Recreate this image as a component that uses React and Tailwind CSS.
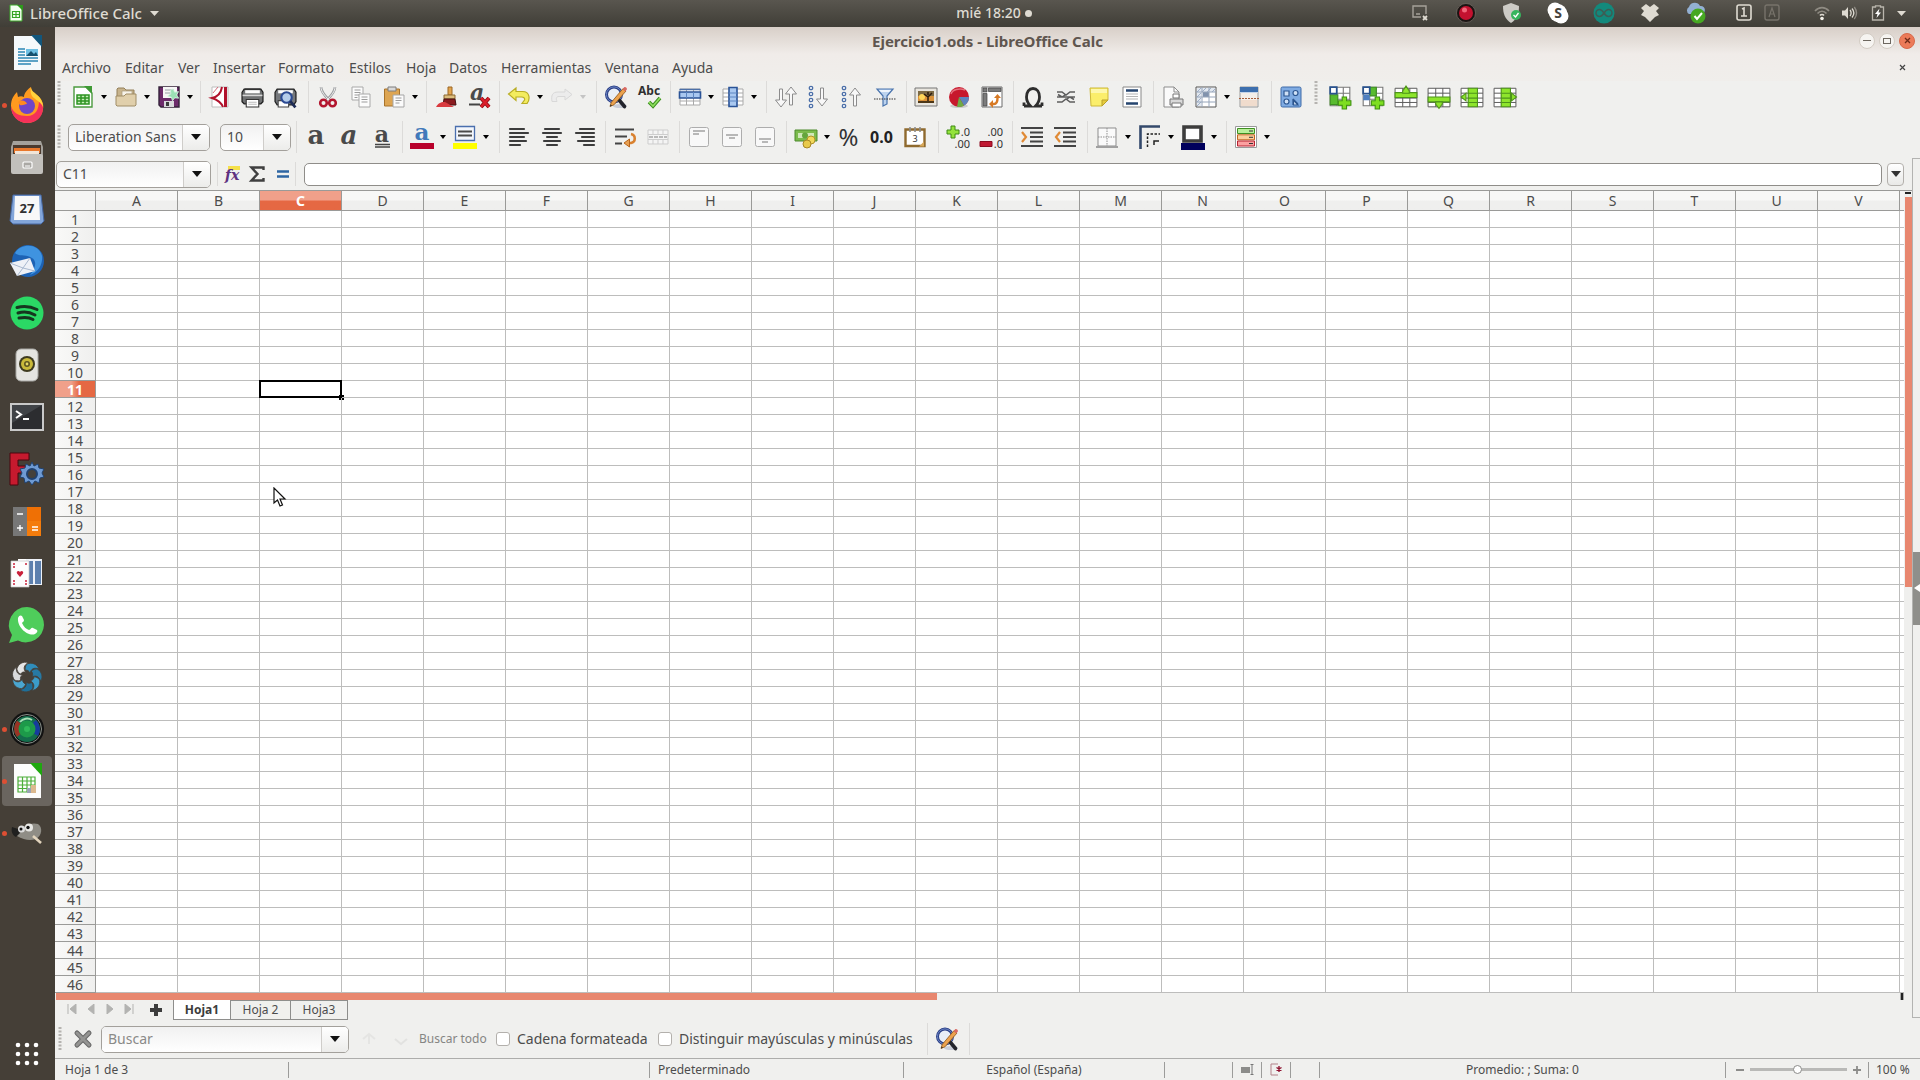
import React from "react";

const COLUMNS = "ABCDEFGHIJKLMNOPQRSTUV".split("");
const ROWS = Array.from({ length: 46 }, (_, i) => i + 1);

/* ---------- shared pieces ---------- */

function Ic({ children, size = 22, box = 22 }) {
  return (
    <svg width={size} height={size} viewBox={`0 0 ${box} ${box}`} fill="none" aria-hidden="true" className="shrink-0 overflow-visible">
      {children}
    </svg>
  );
}

function Tool({ label, children, menu, disabled }) {
  return (
    <>
      <button type="button" aria-label={label} title={label} disabled={disabled} className="flex h-8 w-[33px] shrink-0 items-center justify-center">
        {children}
      </button>
      {menu && (
        <button type="button" aria-label={`${label}: opciones`} disabled={disabled} className="flex h-8 w-[10px] shrink-0 items-center justify-center">
          <svg width="6" height="4" viewBox="0 0 6 4" className={disabled ? "text-[#c4c4c4]" : "text-black"} aria-hidden="true">
            <path d="M0 0h6L3 4z" fill="currentColor" />
          </svg>
        </button>
      )}
    </>
  );
}

function Group({ className, first, children }) {
  return (
    <div className={`flex h-8 shrink-0 items-center border-l pl-[2px] ${first ? "border-transparent" : "border-[#dcdbd9]"} ${className}`}>
      {children}
    </div>
  );
}

function Grip() {
  return (
    <div className="flex h-6 w-[8px] shrink-0 items-center justify-center">
      <svg width="4" height="24" viewBox="0 0 4 24" aria-hidden="true">
        <path d="M2 0v24" stroke="#b5b3b0" strokeWidth="3" strokeDasharray="2 1.5" />
      </svg>
    </div>
  );
}

function Combo({ label, value, className }) {
  return (
    <div className={`relative h-[27px] shrink-0 ${className}`}>
      <select
        aria-label={label}
        defaultValue={value}
        className="h-full w-full appearance-none overflow-hidden rounded-[5px] border border-[#a3a09b] bg-gradient-to-b from-[#f1f1f1] to-white pr-[28px] pl-[6px] text-sm leading-5 text-[#4c4c4c]"
      >
        <option>{value}</option>
      </select>
      <span className="pointer-events-none absolute inset-y-px right-px flex w-[27px] items-center justify-center rounded-r-[4px] border-l border-[#cfcdca] bg-gradient-to-b from-white to-[#ececea]">
        <svg width="10" height="6" viewBox="0 0 10 6" aria-hidden="true"><path d="M0 0h10L5 6z" fill="#111" /></svg>
      </span>
    </div>
  );
}

/* ---------- toolbar drawings ---------- */

const magnifierPencil = (
  <Ic size={24} box={24}>
    <ellipse cx="16" cy="21" rx="7" ry="2" fill="#c9cdd8" />
    <circle cx="10" cy="9.5" r="7.5" stroke="#2b3f86" strokeWidth="3" fill="#e9eef6" />
    <circle cx="10" cy="9.5" r="7.6" stroke="#6b85c4" strokeWidth="1" />
    <path d="M15.5 15.5l5 6" stroke="#23242c" strokeWidth="3.6" strokeLinecap="round" />
    <path d="M6 21.5l1.2-4L19 3.6l3 2.4L10 19.8z" fill="#eca24e" stroke="#8a5418" strokeWidth=".8" />
    <path d="M18.6 4l1.6-1.8c1-.8 3.4 1 2.6 2.4L21.4 6.4z" fill="#d96a63" />
    <path d="M6 21.5l.7-2 1.3 1.1z" fill="#222" />
  </Ic>
);

const newSheet = (
  <Ic>
    <path d="M2 1h12l6 6v14H2z" fill="#fff" stroke="#4b9a3f" strokeWidth="1.4" />
    <path d="M12 0h8v8z" fill="#3f9a35" />
    <path d="M5 9h12v9H5z" fill="#c6efb9" />
    <path d="M5 9h12v9H5zM5 12h12M5 15h12M9 9v9M13 9v9" stroke="#2e9422" strokeWidth="1.5" />
  </Ic>
);
const openFolder = (
  <Ic>
    <path d="M2 3l1-1h6l2 2h8v15H2z" fill="#c7b38c" stroke="#94805a" />
    <path d="M7 5h10v9H7z" fill="#f7f3e9" stroke="#a99b7c" strokeWidth=".7" />
    <path d="M1 10h8l2-2h10v11l-1 1H2l-1-1z" fill="#e0cfab" stroke="#a08d67" />
  </Ic>
);
const save = (
  <Ic size={24} box={24}>
    <path d="M2 2h20v20H4l-2-2z" fill="#6d2b6b" stroke="#34223a" strokeWidth="1.4" />
    <path d="M6 2h14v11H6z" fill="#f7f7f7" />
    <path d="M8 5h9M8 8h7" stroke="#9aa0a6" />
    <path d="M7 16h10v6H7z" fill="#d9d9dc" />
    <path d="M9 17h3v4H9z" fill="#3b3b3b" />
    <path d="M16 4l1.7 3.2 3.8-.6-1.8 3.4 2 3.2-3.9-.4-2.3 3-1.2-3.6-3.6-1.2 3.2-2.2-.5-3.6z" fill="#9be0b5" stroke="#d4f3df" strokeWidth=".8" />
  </Ic>
);
const pdf = (
  <Ic>
    <path d="M3 1h16v20H3z" fill="#fff" stroke="#bdbdbd" />
    <path d="M13 1C12 7 8 11 3 12c6 2 9 4 11 9" stroke="#b1122c" strokeWidth="2" />
    <path d="M16.5 1v20" stroke="#b1122c" strokeWidth="3" />
    <path d="M9 1L4 7" stroke="#d16a79" />
  </Ic>
);
const printer = (
  <Ic size={23}>
    <path d="M4 3h14v6H4z" fill="#fafafa" stroke="#333" />
    <path d="M1 6l2-3h16l2 3v9l-2 2H3l-2-2z" fill="#6f7172" stroke="#1f1f1f" strokeWidth="1.2" />
    <path d="M4 4h14v3H4z" fill="#fdfdfd" />
    <path d="M1.5 9h19" stroke="#d6d6d6" strokeWidth="1.5" />
    <path d="M5 13h12v7H5z" fill="#fff" stroke="#333" />
    <path d="M7 15.5h8M7 17.5h8" stroke="#bcbcbc" />
  </Ic>
);
const preview = (
  <Ic size={23}>
    <path d="M1 6l2-3h16l2 3v9l-2 3H3l-2-3z" fill="#75787c" stroke="#1f1f1f" strokeWidth="1.2" />
    <path d="M4 4h14v3H4z" fill="#fdfdfd" />
    <path d="M4 14h10v6H4z" fill="#fff" stroke="#444" />
    <circle cx="12" cy="11" r="5" fill="#b5cdea" stroke="#2b4a93" strokeWidth="2" />
    <path d="M15.5 14.5l5 6" stroke="#1d2b55" strokeWidth="2.6" />
  </Ic>
);
const cut = (
  <Ic>
    <path d="M4 1c0 4 3 8 8 13M18 1c0 4-3 8-8 13" stroke="#9a9c9e" strokeWidth="2.6" />
    <path d="M4 1c0 4 3 8 8 13M18 1c0 4-3 8-8 13" stroke="#f2f2f2" strokeWidth="1" />
    <circle cx="6.5" cy="17" r="3.3" stroke="#b3162e" strokeWidth="2.6" />
    <circle cx="15.5" cy="17" r="3.3" stroke="#b3162e" strokeWidth="2.6" />
  </Ic>
);
const copy = (
  <Ic>
    <path d="M2 1h11v13H2z" fill="#fcfcfc" stroke="#a8a8a8" />
    <path d="M4.5 4h6M4.5 6.5h6M4.5 9h6M4.5 11.5h3" stroke="#9c9c9c" />
    <path d="M9 8h11v13H9z" fill="#fcfcfc" stroke="#a8a8a8" />
    <path d="M11.5 11h6M11.5 13.5h6M11.5 16h6" stroke="#9c9c9c" />
  </Ic>
);
const paste = (
  <Ic>
    <path d="M1.5 3h15v17h-15z" fill="#dda552" stroke="#a8732a" />
    <path d="M5 1h8v4H5z" fill="#d9d9d9" stroke="#7c7c7c" />
    <path d="M10 9h11v12H10z" fill="#fbfbfb" stroke="#a5a5a5" />
    <path d="M12.5 12h6M12.5 14.5h6M12.5 17h4" stroke="#9c9c9c" />
  </Ic>
);
const brush = (
  <Ic>
    <path d="M13 1h4v8h-4z" fill="#e3a54e" stroke="#9c6722" />
    <path d="M9 9h11v4H9z" fill="#dcbd7d" stroke="#8c6a32" />
    <path d="M9 13h11l1 6H8z" fill="#8b1b1f" stroke="#451012" />
    <path d="M1 21c3-5 6-5 9-5l9 5z" fill="#d93a3f" />
  </Ic>
);
const clearFormat = (
  <Ic size={24} box={24}>
    <text x="3" y="15" fontFamily="DejaVu Serif, serif" fontStyle="italic" fontWeight="bold" fontSize="22" fill="#4b4b4b">a</text>
    <path d="M2 19.5h11" stroke="#444" strokeWidth="2" />
    <path d="M14 13l8 9M22 13l-8 9" stroke="#8e0c14" strokeWidth="4" />
    <path d="M14 13l8 9M22 13l-8 9" stroke="#dc1f2b" strokeWidth="2.4" />
  </Ic>
);
const undo = (
  <Ic size={24} box={24}>
    <path d="M9 3L1.5 9 9 15.5V12h5.5c2.5 0 3.5 1.5 3 3l-2.5 3.5h5c3-3.5 3.5-12-4.5-12H9z" fill="#f3ec5f" stroke="#b9ad25" strokeWidth="1.2" />
  </Ic>
);
const redo = (
  <Ic size={24} box={24}>
    <path d="M15 4l7 5.5-7 5.5v-3.5H9c-3 0-3 2-2 5H2C1 11 2 7 8 7h7z" fill="#ececec" stroke="#d8d8d8" />
  </Ic>
);
const spell = (
  <Ic size={26} box={26}>
    <text x="2" y="11" fontFamily="Noto Sans, sans-serif" fontWeight="bold" fontSize="12" fill="#303030">Abc</text>
    <path d="M13 18l4 4 7-8" stroke="#3d8f1f" strokeWidth="3.6" />
    <path d="M13 18l4 4 7-8" stroke="#8fe060" strokeWidth="1.6" />
  </Ic>
);
const rowIcon = (
  <Ic size={24} box={24}>
    <path d="M2 4h20v16H2z" fill="#fff" stroke="#a9a9a9" />
    <path d="M2 8h20M2 12h20M2 16h20M8.5 4v16M15.5 4v16" stroke="#a9a9a9" />
    <path d="M1.5 7h21v6h-21z" fill="#a9c8f0" stroke="#2a5397" strokeWidth="1.6" />
    <path d="M1.5 4.5h21" stroke="#4c70a8" strokeWidth="1.5" />
    <path d="M8.5 7v6M15.5 7v6" stroke="#5c86c2" />
  </Ic>
);
const colIcon = (
  <Ic size={24} box={24}>
    <path d="M2 4h20v16H2z" fill="#fff" stroke="#a9a9a9" />
    <path d="M2 8h20M2 12h20M2 16h20M8.5 4v16M15.5 4v16" stroke="#a9a9a9" />
    <path d="M8 2.5h8v19H8z" fill="#a9c8f0" stroke="#2a5397" strokeWidth="1.6" />
    <path d="M8 8h8M8 12h8M8 16h8" stroke="#5c86c2" />
  </Ic>
);
const arrowDown = "M-1.5 0h3v11h4L0 18l-5.5-7h4z";
const sort = (
  <Ic size={24} box={24}>
    <g fill="#f8f8f8" stroke="#8c8c8c">
      <path d={arrowDown} transform="translate(7 4)" />
      <path d={arrowDown} transform="translate(17 20) scale(1 -1)" />
    </g>
  </Ic>
);
const dots = (
  <g stroke="#4a6ea8" strokeWidth="1.3" fill="#fff">
    <circle cx="4" cy="3" r="1.7" /><circle cx="4" cy="9" r="1.7" /><circle cx="4" cy="15" r="1.7" /><circle cx="4" cy="21" r="1.7" />
  </g>
);
const sortAsc = (
  <Ic size={24} box={24}>{dots}<path d={arrowDown} transform="translate(15 3)" fill="#f8f8f8" stroke="#8c8c8c" /></Ic>
);
const sortDesc = (
  <Ic size={24} box={24}>{dots}<path d={arrowDown} transform="translate(15 21) scale(1 -1)" fill="#f8f8f8" stroke="#8c8c8c" /></Ic>
);
const filter = (
  <Ic>
    <path d="M3 3h16l-6 7v8l-4 2v-10z" fill="#bcd3ee" stroke="#4a74ad" strokeWidth="1.2" />
    <path d="M5 4h12l-2 2H7z" fill="#eef5fc" />
    <path d="M0 13h22" stroke="#333" strokeDasharray="1.5 1" />
  </Ic>
);
const picture = (
  <Ic size={24} box={24}>
    <path d="M1 3h22v18H1z" fill="#e9e6df" stroke="#777" />
    <path d="M4 6h16v12H4z" fill="#d9913a" />
    <path d="M4 6h16v5H4z" fill="#7d6a44" />
    <circle cx="8" cy="12" r="3" fill="#ffd65a" />
    <path d="M14 18v-6l-4-3M14 12l4-4M14 10V7" stroke="#2c1c0c" strokeWidth="1.5" />
    <path d="M4 16h16v2H4z" fill="#4c3718" />
  </Ic>
);
const chart = (
  <Ic>
    <ellipse cx="11" cy="20" rx="9" ry="2" fill="#ccc" />
    <circle cx="11" cy="11" r="10" fill="#c7182c" />
    <path d="M11 11h10a10 10 0 01-5 8.7z" fill="#5f84bd" />
    <path d="M11 11l5 8.7a10 10 0 01-7 1z" fill="#70ab45" />
    <path d="M3 8a9 6 0 0114-4" stroke="#e4707c" strokeWidth="1.5" />
  </Ic>
);
const pivot = (
  <Ic>
    <path d="M1 1h20v20H1z" fill="#fff" stroke="#6c6c6c" />
    <path d="M2 2h4v4H2zM7.5 2H20v3.5H7.5zM2 7.5h4V20H2z" fill="#7c7c7c" stroke="#444" strokeWidth=".7" />
    <path d="M11 18h2c3 0 3.500-3 3.500-6" stroke="#d77a25" strokeWidth="2.4" />
    <path d="M13 12l3.500-4 3.500 4zM12 14l-4 4 4 4z" fill="#d77a25" />
  </Ic>
);
const omega = (
  <Ic><path d="M2 20h6.500c-3-3-4-5.500-4-9C4.500 6 7 2.500 11 2.500s6.500 3.500 6.500 8.500c0 3.500-1 6-4 9H20M2 20v-3.500M20 20v-3.500" stroke="#2d2d2d" strokeWidth="2.8" /></Ic>
);
const link = (
  <Ic>
    <path d="M2 6h5l4 3 4-3h5M2 16h5l4-3 4 3h5M2 11h5l3-2M20 11h-5l-3 2M7 11h8M3 8.500l4 2.500M19 13.500l-4-2.500" stroke="#5d5d5d" strokeWidth="1.5" />
  </Ic>
);
const note = (
  <Ic>
    <path d="M2 2h18v12l-6 6H3z" fill="#fbee6b" stroke="#cdb93a" />
    <path d="M3 3h16v4H3z" fill="#fdf7ad" />
    <path d="M20 14h-6v6z" fill="#e6cb3c" stroke="#b8a02c" />
  </Ic>
);
const headerFooter = (
  <Ic>
    <path d="M2 1h18v20H2z" fill="#fff" stroke="#888" />
    <path d="M5 4.5h12M5 17.5h12" stroke="#26456f" strokeWidth="2.6" />
    <path d="M5 8h12M5 10.5h12M5 13h12" stroke="#b5b5b5" />
  </Ic>
);
const printArea = (
  <Ic>
    <path d="M2 1h10l5 5v15H2z" fill="#fafafa" stroke="#8d8d8d" />
    <path d="M12 1v5h5" stroke="#8d8d8d" />
    <path d="M11 8h6v4h-6z" fill="#fff" stroke="#777" />
    <path d="M8 13h13v6H8z" fill="#d9d9d9" stroke="#777" />
    <path d="M10 17h9v4h-9z" fill="#fff" stroke="#777" />
  </Ic>
);
const freeze = (
  <Ic>
    <path d="M1 1h20v20H1z" fill="#fff" stroke="#555" />
    <path d="M2 2h18v4H2zM2 6h4v14H2z" fill="#e2e8f0" />
    <path d="M2 6l4-4M7 6l4-4M12 6l4-4M17 6l3-3M2 11l4-4M2 16l4-4M2 20l4-4" stroke="#9fb0c8" />
    <path d="M8 6h6v5H8z" fill="#8193ad" />
    <path d="M7 1v20M14 1v20M1 6h20M1 11h20M1 16h20" stroke="#96a5ba" />
  </Ic>
);
const split = (
  <Ic>
    <path d="M2 1h18v20H2z" fill="#f4efe9" stroke="#9b9b9b" />
    <path d="M2 1h18v5H2z" fill="#3d6fae" />
    <path d="M2 6.5h18" stroke="#c6d5e8" />
    <path d="M1 12.5h20" stroke="#a85e3a" strokeDasharray="2 1" />
    <path d="M3 14h16v6H3z" fill="#f0dccd" />
  </Ic>
);
const shapes = (
  <Ic>
    <rect x="1" y="1" width="20" height="20" rx="1.5" fill="#7fabe2" stroke="#3f6ba8" />
    <g fill="#cfe0f5" stroke="#2d5791" strokeWidth="1.2">
      <path d="M4 5h5v5H4zM13.5 14v5h4.500z" /><circle cx="15.5" cy="7" r="2.5" /><circle cx="6.5" cy="15.5" r="2.5" />
      <path d="M13 13l5 5M13 13v6" />
    </g>
  </Ic>
);
const gridBase = (
  <>
    <path d="M1 3h20v17H1z" fill="#fff" stroke="#5a5a5a" strokeWidth=".9" />
    <path d="M1 7.5h20M1 12h20M1 16h20M8 3v17M14.5 3v17" stroke="#5a5a5a" strokeWidth=".9" />
  </>
);
const plusGreen = (
  <path d="M13 11h4v3.500h4v4h-4V22h-4v-3.500H9.500v-4H13z" fill="#7ede22" stroke="#3f9210" />
);
const insRow = (
  <Ic size={24}><path d="M2 2h18v17H2z" fill="#fff" stroke="#777" /><path d="M2 7.500h18M2 13h18M8 2v17M14 2v17" stroke="#777" /><path d="M2 9h7v9H2z" fill="#58bb2e" stroke="#3c8e20" /><path d="M2 2h6v6H2z" fill="#fff" stroke="#28528e" strokeWidth="1.6" />{plusGreen}</Ic>
);
const insCol = (
  <Ic size={24}><path d="M2 2h18v17H2z" fill="#fff" stroke="#777" /><path d="M2 7.500h18M2 13h18M8 2v17M14 2v17" stroke="#777" /><path d="M8 2h6v8H8z" fill="#58bb2e" stroke="#3c8e20" /><path d="M2 9h6v5H2z" fill="#4f7fc0" /><path d="M2 2h6v6H2z" fill="#fff" stroke="#28528e" strokeWidth="1.6" />{plusGreen}</Ic>
);
const rowAbove = <Ic size={24}>{gridBase}<path d="M1 7h20v4.500H1z" fill="#8ee52c" stroke="#4d941a" /><path d="M8 5.500l3-4.500 3 4.500v2H8z" fill="#8ee52c" stroke="#4d941a" /></Ic>;
const rowBelow = <Ic size={24}>{gridBase}<path d="M1 11h20v4.500H1z" fill="#8ee52c" stroke="#4d941a" /><path d="M8 17.500l3 4 3-4v-2H8z" fill="#8ee52c" stroke="#4d941a" /></Ic>;
const colBefore = <Ic size={24}>{gridBase}<path d="M7.500 3H16v17H7.500z" fill="#8ee52c" stroke="#4d941a" /><path d="M7.500 7.500h8.500M7.500 12h8.500M7.500 16h8.500" stroke="#4d941a" /><path d="M5.500 7.500L1 11l4.500 3.500z" fill="#8ee52c" stroke="#4d941a" /></Ic>;
const colAfter = <Ic size={24}>{gridBase}<path d="M7.500 3H16v17H7.500z" fill="#8ee52c" stroke="#4d941a" /><path d="M7.500 7.500h8.500M7.500 12h8.500M7.500 16h8.500" stroke="#4d941a" /><path d="M17 7.500l4.500 3.500-4.500 3.500z" fill="#8ee52c" stroke="#4d941a" /></Ic>;

function Letter({ italic, under, color = "#4a4a4a" }) {
  return (
    <Ic>
      <text x="11" y={under ? "16" : "18"} textAnchor="middle" fontFamily="DejaVu Serif, serif" fontWeight="bold" fontStyle={italic ? "italic" : "normal"} fontSize={under ? "22" : "26"} fill={color}>a</text>
      {under && <path d="M4 18.500h15M4 21h15" stroke="#444" strokeWidth="1.300" />}
    </Ic>
  );
}
const fontColor = (
  <Ic size={24} box={24}>
    <text x="12" y="15" textAnchor="middle" fontFamily="DejaVu Serif, serif" fontWeight="bold" fontSize="23" fill="#4179ba">a</text>
    <path d="M0 18h24v6H0z" fill="#b8002a" />
  </Ic>
);
const highlight = (
  <Ic size={24} box={24}>
    <path d="M2.500 1.500h19v14h-19z" fill="#f3f6fb" stroke="#4a6fae" strokeWidth="1.300" />
    <path d="M5 6.500h14M5 10.500h14" stroke="#4a4a4a" strokeWidth="2" />
    <path d="M0 18h24v6H0z" fill="#ff0" />
  </Ic>
);
function Align({ rows }) {
  return (
    <Ic>
      {rows.map(([a, b], i) => (
        <path key={i} d={`M${a} ${3 + i * 4}h${b}`} stroke="#3c3c3c" strokeWidth="2.200" strokeLinecap="round" />
      ))}
    </Ic>
  );
}
const wrap = (
  <Ic size={24} box={24}>
    <path d="M2 4.500h19M2 11.500h12M2 18.500h7" stroke="#444" strokeWidth="2.200" />
    <path d="M18 9c5 1 5 8 0 9h-3" stroke="#d9812f" strokeWidth="2.600" />
    <path d="M16.500 14v8L11 18z" fill="#e8a052" stroke="#b9661c" />
  </Ic>
);
const merge = (
  <Ic>
    <path d="M1 4h20v14H1zM1 8.500h20M1 13.500h20M6 4v4.500M11 4v4.500M16 4v4.500M6 13.500V18M11 13.500V18M16 13.500V18" stroke="#cdcdcd" fill="#f4f4f4" />
    <path d="M2 11h18" stroke="#bababa" strokeWidth="2" strokeDasharray="4 1" />
  </Ic>
);
function VAlign({ y, short }) {
  return (
    <Ic>
      <rect x="1.500" y="1.500" width="19" height="19" rx="2" fill="#f8f8f8" stroke="#adadad" />
      <path d={`M5 ${y}h12M${short} ${y + 3}h6`} stroke="#777" />
    </Ic>
  );
}
const currency = (
  <Ic size={24} box={24}>
    <path d="M1 5h22v11H1z" fill="#7bbb4c" stroke="#4c8a2c" />
    <path d="M4 8h16v5H4z" fill="#cfe8b8" />
    <circle cx="11" cy="10.500" r="3" fill="#63a53c" />
    <circle cx="17" cy="15" r="4" fill="#f2d95b" stroke="#b0912a" />
    <circle cx="13" cy="19" r="4" fill="#e8c94b" stroke="#a88724" />
  </Ic>
);
const calendarIcon = (
  <Ic>
    <path d="M1.500 3.500h19V20h-19z" fill="#fff" stroke="#8f6a2e" strokeWidth="2.400" />
    <path d="M6 1v5M11 1v5M16 1v5" stroke="#8d8d8d" strokeWidth="1.600" />
    <text x="11" y="16" textAnchor="middle" fontFamily="Noto Sans, sans-serif" fontSize="9" fill="#333">3</text>
    <path d="M15 20.500l5-5v5z" fill="#d7a758" />
  </Ic>
);
function Decimal({ add }) {
  return (
    <Ic size={24} box={24}>
      {add
        ? <path d="M5 1h4v4h4v4H9v4H5V9H1V5h4z" fill="#93e33c" stroke="#3e8a14" />
        : <path d="M1 16.500h12v5H1z" fill="#c01a33" stroke="#8c0d20" />}
      <text x="24" y="11" textAnchor="end" fontFamily="Noto Sans, sans-serif" fontSize="11" fill="#333">{add ? ".0" : ".00"}</text>
      <text x="24" y="23" textAnchor="end" fontFamily="Noto Sans, sans-serif" fontSize="11" fill="#333">{add ? ".00" : ".0"}</text>
    </Ic>
  );
}
function Indent({ out }) {
  return (
    <Ic size={24} box={24}>
      <path d="M1 3h22M1 21h22M10 7.500h13M10 12h13M10 16.500h13" stroke="#444" strokeWidth="2" />
      <path d={out ? "M7 7l-4 5 4 5" : "M2 7l4 5-4 5"} stroke="#e08a35" strokeWidth="2.200" />
    </Ic>
  );
}
const borders = (
  <Ic size={24} box={24}>
    <path d="M3 3h18v18H3z" fill="#fafafa" stroke="#8d8d8d" />
    <path d="M12 3v18M3 12h18" stroke="#8f8f8f" strokeDasharray="1.500 1" />
    <path d="M1 22h22" stroke="#a0a0a0" strokeWidth="2" />
  </Ic>
);
const borderStyle = (
  <Ic size={24} box={24}>
    <path d="M2.500 24V1.500H22" stroke="#34496b" strokeWidth="2.600" />
    <path d="M9.500 22V9H22" stroke="#222" strokeWidth="1.500" strokeDasharray="2.500 1.500" />
    <path d="M16 20v-4h5" stroke="#222" strokeWidth="1.500" />
  </Ic>
);
const borderColor = (
  <Ic size={26} box={26}>
    <path d="M4 3h17v14H4z" fill="#fff" stroke="#3d3d3d" strokeWidth="3.600" />
    <path d="M1 19h24v7H1z" fill="#00005c" />
  </Ic>
);
const conditional = (
  <Ic size={24} box={24}>
    <path d="M1.500 1.500h21v21h-21z" fill="#fff" stroke="#9a9a9a" />
    <path d="M3.500 3.500h17v5h-17z" fill="#b9f09a" stroke="#3f8f22" />
    <path d="M3.500 9.800h17v5h-17z" fill="#fbcf9d" stroke="#c0641e" />
    <path d="M3.500 16h17v5h-17z" fill="#fba0a0" stroke="#b62130" />
    <path d="M15 6h4M15 12.300h4M15 18.500h4" stroke="#333" />
  </Ic>
);

/* ---------- dock ---------- */

const D = ({ children }) => <Ic size={36} box={36}>{children}</Ic>;

const blade = "M18 5C23 3 28 5 30 10C25 8 22 10 21 14C20 12 19 11 16 11C16 8 17 6 18 5z";
const bladeColors = ["#2f8dbb", "#2779a3", "#3b9cc9", "#1f6f99", "#4aa6d0", "#d9dadb", "#e6e6e6"];

const dockItems = [
  { name: "LibreOffice Writer", icon: <D><path d="M5 1h19l8 9v25H5z" fill="#f5f9fb" /><path d="M22 0h11v12z" fill="#12567c" /><path d="M9 14h7M9 17h7M9 20h7M9 23h20M9 26h20M9 29h13" stroke="#2c86b5" strokeWidth="1.6" /><path d="M17 14h12v7H17z" fill="#6ec0e4" /><path d="M17 21l5-5 3 3 2-2 2 4z" fill="#14506f" /></D> },
  { name: "Firefox", running: true, icon: <D><path d="M2 19C2 12 5 8 8 5l1 5c2-1 4-1 6 0C15 6 19 2 22 0c0 4 3 5 6 8 5 4 7 9 6 14-1 8-8 14-16 14S2 29 2 19z" fill="#ff9a1f" /><path d="M2 19c0 10 7 17 16 17s16-6 16-15c0-4-2-6-4-8 0 9-3 16-12 16C10 29 4 26 2 19z" fill="#f5315a" /><path d="M22 0c0 4 3 5 6 8 4 3 6 8 6 12-2-5-6-6-9-9-3-2-4-6-3-11z" fill="#ffd23c" /><circle cx="18" cy="19" r="8" fill="#6e45c9" /><path d="M9 15c4-3 8-1 9 2-3 0-4 2-7 1z" fill="#ff8a1e" /></D> },
  { name: "Archivos", icon: <D><path d="M4 2h28l2 6v22H2V8z" fill="#a4a19c" /><path d="M4 6h28v10H4z" fill="#4b3a2e" /><path d="M5 9h26v5H5z" fill="#e9782c" /><path d="M6 12h24v3H6z" fill="#f1e5d8" /><rect x="2" y="15" width="32" height="20" rx="2" fill="#c2c0bc" /><rect x="14" y="23" width="9" height="6" rx="1" fill="#aaa8a4" stroke="#fff" strokeWidth="1.2" /><path d="M16 27h5" stroke="#fff" /></D> },
  { name: "Calendario", icon: <D><path d="M4 4h28l3 26-3 3H4l-3-3z" fill="#83a6da" stroke="#4669a5" /><path d="M6 5h24l1 24H5z" fill="#f8f8f8" /><text x="18" y="22" textAnchor="middle" fontFamily="Noto Sans, sans-serif" fontWeight="bold" fontSize="13" fill="#303030">27</text></D> },
  { name: "Thunderbird", icon: <D><circle cx="19" cy="18" r="16" fill="#1d62b4" /><path d="M6 10C12 0 30 0 33 13c1 7-3 16-12 19 6-7 7-14 2-17C18 11 10 14 6 10z" fill="#3f93e0" /><path d="M1 20l20-5 5 13-18 5z" fill="#eef1f7" /><path d="M1 20l13 5 7-10M8 33l6-8 12 3" stroke="#a9b9d0" /></D> },
  { name: "Spotify", icon: <D><circle cx="18" cy="18" r="16.5" fill="#2bd965" /><path d="M8 12.500c7-2 14-1 20 2M9 18c6-2 12-1 17 2M10 23c5-1 10-1 14 1.500" stroke="#16361f" strokeWidth="3" strokeLinecap="round" /></D> },
  { name: "Rhythmbox", icon: <D><rect x="7" y="2" width="22" height="32" rx="5" fill="#e4e4e1" stroke="#a9a9a5" /><circle cx="18" cy="17" r="8" fill="#3e3b20" /><circle cx="18" cy="17" r="6" fill="#c9b93a" /><circle cx="18" cy="17" r="3" fill="#5e5622" /><circle cx="18" cy="17" r="1.4" fill="#e6d965" /></D> },
  { name: "Terminal", icon: <D><path d="M2 5h32v26H2z" fill="#2c2d30" stroke="#c9c9c9" strokeWidth="2" /><path d="M3 6h30L3 24z" fill="#404347" /><path d="M7 12l5 3.500L7 19M14 20h6" stroke="#fff" strokeWidth="2" /></D> },
  { name: "FreeCAD", icon: <D><path d="M1 2h19v7H9v6h9v7H9v12H1z" fill="#c61a2e" stroke="#4b070f" /><g stroke="#20416e" fill="#6e9ad3"><path d="M23 11l2 4 4-2 1 4 5 1-2 4 2 4-4 1-1 5-4-2-3 4-3-4-4 2-1-5-4-1 2-4-2-4 5-1 1-4 4 2z" /><circle cx="23" cy="23" r="5" fill="#45413a" strokeWidth="2" /></g></D> },
  { name: "Calculadora", icon: <D><path d="M4 4h14v29H4z" fill="#777" /><path d="M18 4h14v29H18z" fill="#f47c0c" /><path d="M18 4h14v14H18z" fill="#ef7005" /><path d="M8 11h6M8 25h6M11 22v6M23 24h6M23 27h6" stroke="#fff" strokeWidth="1.4" /></D> },
  { name: "Solitario", icon: <D><path d="M9 4h16v26H9z" fill="#fff" /><path d="M17 4h16v26H17z" fill="#eef2f8" /><path d="M20 6h4v23h-4zM26 6h6v23h-6z" fill="#5d80ae" /><path d="M2 6h18v26H2z" fill="#fdfdfd" stroke="#c4c4c4" strokeWidth=".7" /><path d="M11 22l-3-3.500c-1-2 1.500-3.500 3-1.500 1.500-2 4-.5 3 1.500z" fill="#c9203a" /><path d="M4 9h2M4 12h2M16 9h2M4 26h2M16 26h2M16 29h2M4 29h2" stroke="#c9203a" strokeWidth="1.4" /></D> },
  { name: "WhatsApp", icon: <D><path d="M18 0a18 18 0 0117 18 18 18 0 01-26 15.500L0 36l3-8A18 18 0 0118 0z" fill="#4fcd5b" /><path d="M9 11c1-3 3-3 4-2l2 4c0 2-2 2-2 3 2 4 4 6 7 7 2 0 2-3 4-2l4 2c1 1 0 3-2 4-6 3-18-6-17-16z" fill="#fff" /></D> },
  { name: "Shotwell", icon: <D>{bladeColors.map((c, i) => <path key={c} d={blade} fill={c} stroke="#45403a" strokeWidth=".8" transform={`rotate(${i * 51.43} 18 18)`} />)}</D> },
  { name: "Kazam", running: true, icon: <D><circle cx="18" cy="18" r="17" fill="#111" /><circle cx="18" cy="18" r="14.5" stroke="#8b938d" /><circle cx="18" cy="18" r="13" fill="#146d4c" /><path d="M18 18L8 9.500A13 13 0 008 26z" fill="#9a3324" /><path d="M18 18l9-9a13 13 0 012 16z" fill="#163a9e" /><circle cx="18" cy="18" r="8.500" fill="#1d9a4a" /><path d="M11 11a9 9 0 0112-2" stroke="#a7e0b4" strokeWidth="2" /><circle cx="18" cy="18" r="3" fill="#2fb95a" /></D> },
  { name: "LibreOffice Calc", running: true, active: true, icon: <D><path d="M5 1h18l9 10v24H5z" fill="#fdfdfd" /><path d="M21 0h12v13z" fill="#1fa80f" /><path d="M9 14h17v15H9zM9 18h17M9 22h17M9 25.500h17M13.500 14v15M18 14v15M22 14v15" stroke="#4cae39" strokeWidth="1.2" /><path d="M18 25h4v5h-4z" fill="#9ba4b5" /><path d="M22 22h5v8h-5z" fill="#dcb98f" /></D> },
  { name: "GIMP", running: true, icon: <D><path d="M8 17c5-6 14-10 21-8 5 3 4 12-2 15-6 2-12 1-19-3z" fill="#8f8d86" /><path d="M3 12l6 2 2 4-4 4c-4-2-5-6-4-10z" fill="#20201f" /><circle cx="12.500" cy="14" r="3.500" fill="#ddd" /><circle cx="20" cy="12.500" r="4" fill="#e9e9e6" /><circle cx="12" cy="14" r="1.500" fill="#111" /><circle cx="19" cy="12.500" r="1.700" fill="#111" /><path d="M24 21l8 7" stroke="#e2d4bd" strokeWidth="2.600" /></D> },
];

function Dock() {
  return (
    <nav aria-label="Lanzador" className="flex w-[55px] shrink-0 flex-col bg-[#453f37] pr-px">
      {dockItems.map((item) => (
        <button
          key={item.name}
          type="button"
          aria-label={item.name}
          className={`relative flex h-[52px] items-center justify-center ${item.active ? "px-[2px] py-px" : ""}`}
        >
          {item.running && <span className="absolute top-[24px] left-[2px] size-[5px] rounded-full bg-[#dd4f33]" />}
          <span className={item.active ? "flex h-full w-full items-center justify-center rounded bg-white/20" : "flex"}>{item.icon}</span>
        </button>
      ))}
      <button type="button" aria-label="Mostrar aplicaciones" className="mt-auto flex h-[52px] items-center justify-center">
        <svg width="24" height="24" viewBox="0 0 24 24" fill="#fff" aria-hidden="true">
          {[3, 12, 21].map((y) => [3, 12, 21].map((x) => <circle key={`${x}-${y}`} cx={x} cy={y} r="2.3" />))}
        </svg>
      </button>
    </nav>
  );
}

/* ---------- desktop bar ---------- */

function Tray({ className = "w-[46px]", label, children }) {
  return <button type="button" aria-label={label} className={`flex h-[26px] shrink-0 items-center justify-center ${className}`}>{children}</button>;
}

function TopBar() {
  return (
    <header className="grid h-[27px] shrink-0 grid-cols-[1fr_auto_1fr] items-start bg-gradient-to-b from-[#59564f] to-[#403e37] text-[#dfdbd2]">
      <button type="button" className="flex h-[26px] items-center pl-2 text-[15px] leading-5 font-medium">
        <Ic size={16} box={16}><path d="M2 0h8l4 4v12H2z" fill="#f5fff2" stroke="#3fa92d" /><path d="M9 0h6v6z" fill="#2e9a1c" /><path d="M4.500 6.500h7v6h-7zM4.500 9.500h7M8 6.500v6" stroke="#35a524" strokeWidth="1.2" /></Ic>
        <span className="pl-[6px]">LibreOffice Calc</span>
        <svg width="9" height="5" viewBox="0 0 9 5" className="ml-[8px]" aria-hidden="true"><path d="M0 0h9L4.500 5z" fill="#dfdbd2" /></svg>
      </button>
      <button type="button" className="ml-[68px] flex h-[26px] items-center gap-1 text-sm leading-5 font-medium">
        <span>mié 18:20</span>
        <span className="size-[7px] rounded-full bg-[#dfdbd2]" />
      </button>
      <div className="flex justify-end pr-[9px]">
        <Tray label="Pantalla"><Ic size={16} box={16}><path d="M9 12H1V1h13v8M4 9h4" stroke="#a5a199" strokeWidth="1.4" /><path d="M11 11l4 4M15 11l-4 4" stroke="#dfdbd2" strokeWidth="1.8" /></Ic></Tray>
        <Tray label="Grabadora"><Ic size={20} box={20}><circle cx="10" cy="10" r="9.5" fill="#1c1413" stroke="#767069" strokeWidth=".7" /><circle cx="10" cy="10" r="7" fill="#c3112f" /><circle cx="8.500" cy="7" r="2.500" fill="#f0667a" /></Ic></Tray>
        <Tray label="Seguridad"><Ic size={20} box={20}><path d="M9 0l8 3c0 8-2 13-8 17C3 16 1 11 1 3z" fill="#cdcbc6" /><circle cx="14" cy="12" r="5" fill="#36b55d" /><path d="M11.500 12l2 2 3-4" stroke="#fff" strokeWidth="1.3" /></Ic></Tray>
        <Tray label="Skype"><Ic size={22}><circle cx="8" cy="8" r="7.500" fill="#fff" /><circle cx="14" cy="14" r="7.500" fill="#fff" /><circle cx="11" cy="11" r="9" fill="#fff" /><text x="11" y="16" textAnchor="middle" fontFamily="Noto Sans, sans-serif" fontWeight="bold" fontSize="14" fill="#45423b">S</text></Ic></Tray>
        <Tray label="Arduino"><Ic size={22}><circle cx="11" cy="11" r="10.500" fill="#13897c" /><path d="M11 11c-2-3-3-3.500-4.500-3.500a3.500 3.500 0 000 7c1.500 0 2.500-.5 4.500-3.500s3-3.500 4.500-3.500a3.500 3.500 0 010 7c-1.500 0-2.500-.5-4.500-3.500z" stroke="#3c5d55" strokeWidth="1.5" /></Ic></Tray>
        <Tray label="Dropbox"><Ic size={20} box={20}><path d="M6 1l4 3 4-3 5 4-3 3 3 4-4 2-5 5-5-5-4-2 3-4-3-3z" fill="#dfdbd2" /></Ic></Tray>
        <Tray label="Nube"><Ic size={22}><path d="M4 12a4 4 0 010-7c1-5 9-6 11-1 5-1 7 6 2 8z" fill="#93b0d3" /><circle cx="13" cy="14" r="7.500" fill="#46a822" /><path d="M9.500 14l2.500 3 5-6" stroke="#fff" strokeWidth="2" /></Ic></Tray>
        <Tray label="Bloqueo numérico" className="ml-[10px] w-[29px]"><Ic size={18} box={18}><rect x="2" y="1" width="14" height="15" rx="2" stroke="#dfdbd2" strokeWidth="1.6" /><path d="M7 5l2-1v8M6 12h6" stroke="#dfdbd2" strokeWidth="1.6" /></Ic></Tray>
        <Tray label="Bloqueo de mayúsculas" className="w-[28px]"><Ic size={18} box={18}><rect x="2" y="1" width="14" height="15" rx="2" stroke="#77736b" strokeWidth="1.4" /><path d="M6 13l3-9 3 9M7 10h4" stroke="#77736b" strokeWidth="1.2" /></Ic></Tray>
        <Tray label="Wifi" className="ml-[22px] w-[27px]"><Ic size={16} box={16}><path d="M1 6c4-4.500 10-4.500 14 0M3.500 8.500c2.500-3 6.500-3 9 0" stroke="#8f8b83" strokeWidth="1.6" /><path d="M6 10.500c1-1.300 3-1.300 4 0" stroke="#dfdbd2" strokeWidth="1.6" /><circle cx="8" cy="13.500" r="1.8" fill="#f2efe8" /></Ic></Tray>
        <Tray label="Volumen" className="w-[28px]"><Ic size={16} box={16}><path d="M1 5.500h3L7 2v12l-3-3.500H1z" fill="#dfdbd2" /><path d="M9 5c1.500 2 1.500 4 0 6M11 3.500c2.500 3 2.500 6 0 9" stroke="#dfdbd2" strokeWidth="1.3" /><path d="M13.300 2c3 4 3 8 0 12" stroke="#8f8b83" strokeWidth="1.3" /></Ic></Tray>
        <Tray label="Batería" className="w-[29px]"><Ic size={16} box={16}><path d="M5.500 2V.8h5V2h3v13h-11V2z" stroke="#b9b5ac" strokeWidth="1.3" /><path d="M9.500 3.500L5 9h2.500L6.500 13 11 7.500H8.500z" fill="#fff" /></Ic></Tray>
        <Tray label="Sistema" className="w-[19px]"><svg width="9" height="5" viewBox="0 0 9 5" aria-hidden="true"><path d="M0 0h9L4.500 5z" fill="#dfdbd2" /></svg></Tray>
      </div>
    </header>
  );
}

/* ---------- window chrome ---------- */

const menus = [
  ["Archivo", "w-[63px]"], ["Editar", "w-[53px]"], ["Ver", "w-[35px]"], ["Insertar", "w-[65px]"],
  ["Formato", "w-[71px]"], ["Estilos", "w-[57px]"], ["Hoja", "w-[43px]"], ["Datos", "w-[52px]"],
  ["Herramientas", "w-[104px]"], ["Ventana", "w-[67px]"], ["Ayuda", "w-[60px]"],
];

function TitleAndMenu() {
  return (
    <div className="bg-gradient-to-b from-[#d8cfc8] via-[#f0ece9] via-50% to-[#f0eeeb]">
      <div className="grid h-[27px] grid-cols-[1fr_auto_1fr] items-center">
        <span />
        <h1 className="text-[15px] leading-5 font-bold text-[#5f564f]">Ejercicio1.ods - LibreOffice Calc</h1>
        <div className="flex justify-end gap-1 pr-[5px]">
          <button type="button" aria-label="Minimizar" className="flex size-4 items-center justify-center rounded-full border border-[#d3ccc4] bg-[#f6f4f1]"><span className="h-px w-2 bg-[#6d675f]" /></button>
          <button type="button" aria-label="Maximizar" className="flex size-4 items-center justify-center rounded-full border border-[#d3ccc4] bg-[#f6f4f1]"><span className="h-[6px] w-2 border border-[#6d675f]" /></button>
          <button type="button" aria-label="Cerrar" className="flex size-4 items-center justify-center rounded-full border border-[#d8694a] bg-[#ec7a58]"><Ic size={7} box={7}><path d="M1 1l5 5M6 1L1 6" stroke="#6e2a18" strokeWidth="1.3" /></Ic></button>
        </div>
      </div>
      <div className="flex h-[27px] items-center pl-[7px] text-sm leading-5 text-[#4c4c4c]">
        {menus.map(([name, width]) => (
          <button key={name} type="button" className={`text-left ${width}`}>{name}</button>
        ))}
        <button type="button" aria-label="Cerrar documento" className="mr-[12px] ml-auto flex size-3 items-center justify-center"><Ic size={7} box={7}><path d="M1 1l5 5M6 1L1 6" stroke="#444" strokeWidth="1.2" /></Ic></button>
      </div>
    </div>
  );
}

function StandardBar() {
  return (
    <div className="flex h-[35px] items-start">
      <Grip />
      <Group first className="w-[137px]">
        <Tool label="Nuevo" menu>{newSheet}</Tool>
        <Tool label="Abrir" menu>{openFolder}</Tool>
        <Tool label="Guardar" menu>{save}</Tool>
      </Group>
      <Group className="w-[108px]"><Tool label="Exportar como PDF">{pdf}</Tool><Tool label="Imprimir">{printer}</Tool><Tool label="Previsualizar">{preview}</Tool></Group>
      <Group className="w-[118px]"><Tool label="Cortar">{cut}</Tool><Tool label="Copiar">{copy}</Tool><Tool label="Pegar" menu>{paste}</Tool></Group>
      <Group className="w-[73px]"><Tool label="Clonar formato">{brush}</Tool><Tool label="Limpiar formato">{clearFormat}</Tool></Group>
      <Group className="w-[97px]"><Tool label="Deshacer" menu>{undo}</Tool><Tool label="Rehacer" menu disabled>{redo}</Tool></Group>
      <Group className="w-[74px]"><Tool label="Buscar y reemplazar">{magnifierPencil}</Tool><Tool label="Ortografía">{spell}</Tool></Group>
      <Group className="w-[96px]"><Tool label="Fila" menu>{rowIcon}</Tool><Tool label="Columna" menu>{colIcon}</Tool></Group>
      <Group className="w-[140px]"><Tool label="Ordenar">{sort}</Tool><Tool label="Orden ascendente">{sortAsc}</Tool><Tool label="Orden descendente">{sortDesc}</Tool><Tool label="Filtro automático">{filter}</Tool></Group>
      <Group className="w-[107px]"><Tool label="Imagen">{picture}</Tool><Tool label="Gráfico">{chart}</Tool><Tool label="Tabla dinámica">{pivot}</Tool></Group>
      <Group className="w-[140px]"><Tool label="Carácter especial">{omega}</Tool><Tool label="Hiperenlace">{link}</Tool><Tool label="Comentario">{note}</Tool><Tool label="Cabecera y pie">{headerFooter}</Tool></Group>
      <Group className="w-[118px]"><Tool label="Área de impresión">{printArea}</Tool><Tool label="Inmovilizar" menu>{freeze}</Tool><Tool label="Dividir ventana">{split}</Tool></Group>
      <Group className="w-[41px]"><Tool label="Dibujo">{shapes}</Tool></Group>
      <Grip />
      <Group first className="w-[204px]">
        <Tool label="Insertar filas">{insRow}</Tool><Tool label="Insertar columnas">{insCol}</Tool>
        <Tool label="Fila encima">{rowAbove}</Tool><Tool label="Fila debajo">{rowBelow}</Tool>
        <Tool label="Columna antes">{colBefore}</Tool><Tool label="Columna después">{colAfter}</Tool>
      </Group>
    </div>
  );
}

function FormatBar() {
  return (
    <div className="flex h-[42px] items-center">
      <Grip />
      <div className="flex w-[233px] gap-[10px] pl-[5px]">
        <Combo label="Nombre de letra" value="Liberation Sans" className="w-[142px]" />
        <Combo label="Tamaño de letra" value="10" className="w-[71px]" />
      </div>
      <Group className="w-[106px]"><Tool label="Negrita"><Letter /></Tool><Tool label="Cursiva"><Letter italic /></Tool><Tool label="Subrayado"><Letter under /></Tool></Group>
      <Group className="w-[97px]"><Tool label="Color de letra" menu>{fontColor}</Tool><Tool label="Color de resaltado" menu>{highlight}</Tool></Group>
      <Group className="w-[106px]">
        <Tool label="Alinear a la izquierda"><Align rows={[[2, 14], [2, 18], [2, 14], [2, 16], [2, 10]]} /></Tool>
        <Tool label="Centrar"><Align rows={[[4, 14], [2, 18], [6, 10], [3, 16], [6, 10]]} /></Tool>
        <Tool label="Alinear a la derecha"><Align rows={[[6, 14], [2, 18], [8, 12], [4, 16], [10, 10]]} /></Tool>
      </Group>
      <Group className="w-[74px]"><Tool label="Ajustar texto">{wrap}</Tool><Tool label="Combinar celdas" disabled>{merge}</Tool></Group>
      <Group className="w-[107px]"><Tool label="Alinear arriba"><VAlign y={5} short={5} /></Tool><Tool label="Centrar verticalmente"><VAlign y={9} short={8} /></Tool><Tool label="Alinear abajo"><VAlign y={13} short={8} /></Tool></Group>
      <Group className="w-[152px]">
        <Tool label="Moneda" menu>{currency}</Tool>
        <Tool label="Porcentaje"><span className="text-2xl leading-6 text-[#333]">%</span></Tool>
        <Tool label="Número"><span className="text-base leading-5 font-bold text-[#222]">0.0</span></Tool>
        <Tool label="Fecha">{calendarIcon}</Tool>
      </Group>
      <Group className="w-[74px]"><Tool label="Añadir decimal"><Decimal add /></Tool><Tool label="Eliminar decimal"><Decimal /></Tool></Group>
      <Group className="w-[75px]"><Tool label="Aumentar sangría"><Indent /></Tool><Tool label="Reducir sangría"><Indent out /></Tool></Group>
      <Group className="w-[139px]"><Tool label="Bordes" menu>{borders}</Tool><Tool label="Estilo de borde" menu>{borderStyle}</Tool><Tool label="Color de borde" menu>{borderColor}</Tool></Group>
      <Group className="w-[60px]"><Tool label="Formato condicional" menu>{conditional}</Tool></Group>
    </div>
  );
}

function FormulaBar() {
  return (
    <div className="flex h-[32px] items-center pr-[8px] pl-[1px]">
      <Combo label="Cuadro de nombre" value="C11" className="w-[155px]" />
      <span className="ml-[6px] h-6 w-px bg-[#dcdbd9]" />
      <div className="flex pl-[2px]">
        <button type="button" aria-label="Asistente de funciones" className="flex h-6 w-[25px] items-center justify-center">
          <Ic size={18} box={18}><path d="M4 3h12" stroke="#f5e04a" strokeWidth="4" /><text x="1" y="15" fontFamily="DejaVu Serif, serif" fontWeight="bold" fontStyle="italic" fontSize="14" fill="#5f3180">fx</text></Ic>
        </button>
        <button type="button" aria-label="Suma" className="flex h-6 w-[25px] items-center justify-center">
          <Ic size={17} box={17}><path d="M14.500 4V1.500h-12L8.500 8l-6 6.500h12V12" stroke="#3f3f3f" strokeWidth="2.4" /></Ic>
        </button>
        <button type="button" aria-label="Función" className="flex h-6 w-[25px] items-center justify-center">
          <Ic size={12} box={12}><path d="M0 3.500h12M0 8.500h12" stroke="#2d65a3" strokeWidth="2.6" /></Ic>
        </button>
      </div>
      <span className="h-6 w-px bg-[#dcdbd9]" />
      <input aria-label="Línea de entrada" className="ml-[8px] h-[23px] min-w-0 flex-1 rounded-[5px] border border-[#8f8d89] bg-white px-2 text-sm" />
      <button type="button" aria-label="Expandir barra de fórmulas" className="ml-[5px] flex h-[23px] w-[17px] items-center justify-center rounded border border-[#b3b0ac] bg-gradient-to-b from-white to-[#e9e9e7]">
        <svg width="10" height="6" viewBox="0 0 10 6" aria-hidden="true"><path d="M0 0h10L5 6z" fill="#333" /></svg>
      </button>
    </div>
  );
}

function Sheet() {
  return (
    <div className="flex">
      <table className="w-full table-fixed border-separate border-spacing-0 bg-white text-sm leading-4 text-[#4c4c4c]">
        <colgroup>
          <col className="w-[41px]" />
          {COLUMNS.map((c) => <col key={c} className="w-[82px]" />)}
          <col />
        </colgroup>
        <thead>
          <tr className="h-[21px]">
            <th aria-label="Seleccionar todo" className="border-t border-r border-b border-[#9a9a98] bg-[#f5f5f4] p-0" />
            {COLUMNS.map((c) => (
              <th
                key={c}
                scope="col"
                className={`border-t border-r border-b border-[#9a9a98] p-0 ${c === "C" ? "bg-gradient-to-b from-[#f0a08a] from-45% to-[#e56843] to-55% font-bold text-white" : "bg-gradient-to-b from-[#f8f8f7] from-45% to-[#efefee] to-55% font-normal"}`}
              >
                {c}
              </th>
            ))}
            <th aria-label="W" className="border-t border-b border-[#9a9a98] bg-[#f3f3f2] p-0" />
          </tr>
        </thead>
        <tbody>
          {ROWS.map((r) => (
            <tr key={r} className="h-[17px]">
              <th
                scope="row"
                className={`border-r border-b border-[#9a9a98] p-0 ${r === 11 ? "bg-gradient-to-r from-[#f0a08a] from-40% to-[#e56843] to-60% font-bold text-white" : "bg-gradient-to-r from-[#f9f9f8] to-[#efefee] font-normal"}`}
              >
                <span className="block h-4 overflow-visible leading-[18px]">{r}</span>
              </th>
              {COLUMNS.map((c) => (
                <td key={c} className="relative border-r border-b border-[#bdbdbc] p-0">
                  {c === "C" && r === 11 && (
                    <span className="absolute -inset-px border-2 border-black">
                      <span className="absolute -right-[4px] -bottom-[4px] size-[5px] bg-black" />
                    </span>
                  )}
                  {c === "C" && r === 17 && (
                    <svg width="14" height="20" viewBox="0 0 14 20" className="pointer-events-none absolute top-[4px] left-[13px] z-10" aria-hidden="true">
                      <path d="M1 1v15l3.500-3 2.500 6 2.500-1-2.500-6h5z" fill="#fff" stroke="#111" strokeWidth="1.2" />
                    </svg>
                  )}
                </td>
              ))}
              <td className="border-b border-[#bdbdbc] p-0" />
            </tr>
          ))}
        </tbody>
      </table>
      <div role="scrollbar" aria-label="Desplazamiento vertical" aria-controls="hoja" aria-valuenow={0} className="flex w-2 shrink-0 flex-col border-t border-[#9a9a98] bg-[#efefed]">
        <span className="mt-px h-[2px] w-[6px] self-center bg-[#222]" />
        <span className="mt-[3px] h-[390px] w-[7px] self-end bg-[#e8876f]" />
      </div>
    </div>
  );
}

function SheetTabs() {
  const nav = ["M1 0v10M9 0L3 5l6 5z", "M8 0L2 5l6 5z", "M2 0l6 5-6 5z", "M1 0l6 5-6 5zM9 0v10"];
  const names = ["Primera hoja", "Hoja anterior", "Hoja siguiente", "Última hoja"];
  return (
    <div className="flex h-[20px] items-start pl-[7px]">
      {nav.map((d, i) => (
        <button key={names[i]} type="button" aria-label={names[i]} className="flex h-[18px] w-[19px] items-center justify-center">
          <svg width="10" height="10" viewBox="0 0 10 10" aria-hidden="true"><path d={d} fill="#b3b3b1" stroke="#b3b3b1" /></svg>
        </button>
      ))}
      <button type="button" aria-label="Añadir hoja" className="flex h-[20px] w-[35px] items-center justify-center">
        <svg width="12" height="12" viewBox="0 0 12 12" aria-hidden="true"><path d="M6 0v12M0 6h12" stroke="#3c3c3c" strokeWidth="4" /></svg>
      </button>
      <div role="tablist" className="flex text-xs leading-4">
        <button role="tab" aria-selected="true" type="button" className="h-[20px] w-[58px] border-r border-b border-l border-[#8e8e8c] bg-white font-bold text-[#3c3c3c]">Hoja1</button>
        <button role="tab" aria-selected="false" type="button" className="h-[20px] w-[60px] border-t border-r border-b border-[#8e8e8c] text-[#4c4c4c]">Hoja 2</button>
        <button role="tab" aria-selected="false" type="button" className="h-[20px] w-[57px] border-t border-r border-b border-[#8e8e8c] text-[#4c4c4c]">Hoja3</button>
      </div>
    </div>
  );
}

function FindBar() {
  const box = "size-[14px] appearance-none rounded-[3px] border border-[#b3b0ac] bg-white";
  return (
    <div className="flex h-[38px] items-center pl-[1px] text-sm leading-5 text-[#4c4c4c]">
      <Grip />
      <button type="button" aria-label="Cerrar barra de búsqueda" className="flex h-8 w-[37px] items-center justify-center">
        <Ic size={18} box={18}><path d="M3 3l12 12M15 3L3 15" stroke="#666" strokeWidth="5" strokeLinecap="round" /><path d="M3 3l12 12M15 3L3 15" stroke="#949492" strokeWidth="3" strokeLinecap="round" /></Ic>
      </button>
      <div className="flex h-[27px] w-[248px] overflow-hidden rounded-[5px] border border-[#a3a09b] bg-white">
        <input aria-label="Buscar" placeholder="Buscar" className="min-w-0 flex-1 bg-gradient-to-b from-[#f1f1f1] to-white pl-[6px] placeholder:text-[#8a8a88]" />
        <button type="button" aria-label="Historial de búsqueda" className="flex w-[27px] items-center justify-center border-l border-[#cfcdca] bg-gradient-to-b from-white to-[#ececea]">
          <svg width="10" height="6" viewBox="0 0 10 6" aria-hidden="true"><path d="M0 0h10L5 6z" fill="#111" /></svg>
        </button>
      </div>
      <button type="button" disabled aria-label="Buscar anterior" className="ml-[4px] flex h-8 w-[32px] items-center justify-center"><Ic size={14} box={14}><path d="M1 7l6-5 6 5M7 2v10" stroke="#e5e5e3" strokeWidth="2" /></Ic></button>
      <button type="button" disabled aria-label="Buscar siguiente" className="flex h-8 w-[32px] items-center justify-center"><Ic size={14} box={14}><path d="M1 7l6 5 6-5" stroke="#e2e2e0" strokeWidth="2" /></Ic></button>
      <button type="button" disabled className="w-[79px] pl-[2px] text-left text-xs leading-4 text-[#858583]">Buscar todo</button>
      <label className="flex w-[162px] items-center gap-[7px]"><input type="checkbox" className={box} />Cadena formateada</label>
      <label className="flex w-[269px] items-center gap-[7px]"><input type="checkbox" className={box} />Distinguir mayúsculas y minúsculas</label>
      <Group className="w-[42px]"><Tool label="Buscar y reemplazar">{magnifierPencil}</Tool></Group>
      <span className="h-8 w-px bg-[#dcdbd9]" />
    </div>
  );
}

function StatusBar() {
  const cell = "flex h-[16px] shrink-0 items-center border-l border-[#9c9c9a]";
  return (
    <footer className="flex h-[22px] items-center border-t border-[#adadab] text-xs leading-4 text-[#4c4c4c]">
      <div className="w-[233px] shrink-0 pl-[10px]">Hoja 1 de 3</div>
      <div className={`${cell} w-[361px]`} />
      <div className={`${cell} w-[254px] pl-[8px]`}>Predeterminado</div>
      <div className={`${cell} w-[261px] justify-center`}>Español (España)</div>
      <div className={`${cell} w-[68px]`} />
      <div className={`${cell} w-[29px] justify-center`}><Ic size={13} box={13}><path d="M0 4h9v6H0z" fill="#8c8c8a" /><path d="M9.500 1.500h3M9.500 11.500h3M11 1.500v10" stroke="#777" /></Ic></div>
      <div className={`${cell} w-[29px] justify-center`}><Ic size={13} box={13}><path d="M8 1H1v11h7" stroke="#b3828a" /><path d="M9 3v6M6.500 4.500l5 3M11.500 4.500l-5 3" stroke="#8f1230" strokeWidth="1.4" /></Ic></div>
      <div className={`${cell} w-[29px]`} />
      <div className={`${cell} min-w-0 flex-1 justify-center`}>Promedio: ; Suma: 0</div>
      <div className={`${cell} w-[143px] justify-between pr-[7px] pl-[10px]`}>
        <button type="button" aria-label="Reducir escala" className="h-[2px] w-2 bg-[#8c8c8a]" />
        <input
          type="range"
          aria-label="Escala"
          min="0"
          max="100"
          defaultValue="49"
          className="h-[3px] w-[97px] appearance-none bg-[#b9b9b7] [&::-webkit-slider-thumb]:size-[9px] [&::-webkit-slider-thumb]:appearance-none [&::-webkit-slider-thumb]:rounded-full [&::-webkit-slider-thumb]:border [&::-webkit-slider-thumb]:border-solid [&::-webkit-slider-thumb]:border-[#8c8c8a] [&::-webkit-slider-thumb]:bg-white"
        />
        <button type="button" aria-label="Aumentar escala" className="flex"><Ic size={8} box={8}><path d="M4 0v8M0 4h8" stroke="#8c8c8a" strokeWidth="1.8" /></Ic></button>
      </div>
      <div className={`${cell} w-[52px] pl-[7px]`}>100 %</div>
    </footer>
  );
}

export default function App() {
  return (
    <div className="flex min-h-screen flex-col overflow-hidden bg-[#f0f0ee] font-['Noto_Sans',sans-serif]">
      <TopBar />
      <div className="flex flex-1">
        <Dock />
        <main className="min-w-0 flex-1">
          <TitleAndMenu />
          <StandardBar />
          <FormatBar />
          <div className="flex">
            <div className="min-w-0 flex-1">
              <FormulaBar />
              <div id="hoja"><Sheet /></div>
              <div role="scrollbar" aria-label="Desplazamiento horizontal" aria-orientation="horizontal" aria-controls="hoja" aria-valuenow={0} className="flex h-[7px] items-stretch justify-between pr-[8px] pl-[1px]">
                <span className="w-[881px] bg-[#e8876f]" />
                <span className="w-[4px] border-x border-[#a9a9a7] bg-[#222]" />
              </div>
              <SheetTabs />
            </div>
            <aside className="mb-[2px] flex w-2 shrink-0 items-center border-y border-l border-[#b3b3b1]">
              <button type="button" aria-label="Mostrar barra lateral" className="flex h-[73px] w-full items-center justify-end bg-[#8f8f8b]">
                <svg width="6" height="8" viewBox="0 0 6 8" aria-hidden="true"><path d="M6 0v8L0 4z" fill="#fff" /></svg>
              </button>
            </aside>
          </div>
          <FindBar />
          <StatusBar />
        </main>
      </div>
    </div>
  );
}
